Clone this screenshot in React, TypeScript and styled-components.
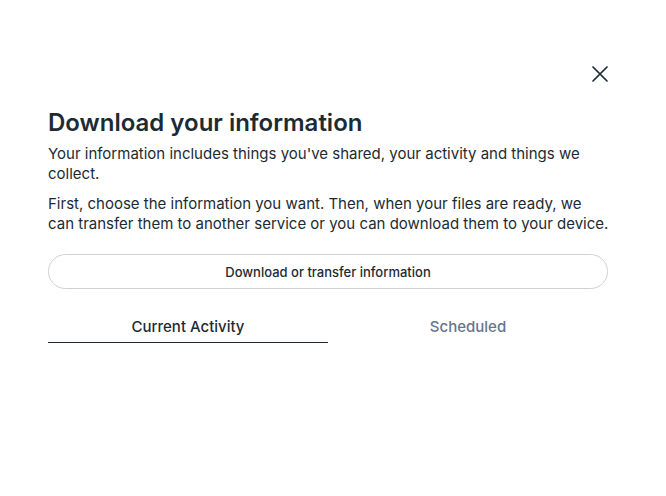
import React from 'react';
import styled, {createGlobalStyle} from 'styled-components';

const Global = createGlobalStyle`
  html, body {
    margin: 0;
    padding: 0;
    background: #fff;
  }
  body {
    font-family: Inter, "Noto Sans", "Liberation Sans", sans-serif;
    color: #1c2b33;
  }
`;

const Page = styled.div`
  width: 666px;
  height: 496px;
  box-sizing: border-box;
  padding: 61px 58px 0 48px;
  display: flex;
  flex-direction: column;
`;

const TopBar = styled.div`
  display: flex;
  justify-content: flex-end;
  height: 26px;
`;

const CloseButton = styled.button`
  width: 26px;
  height: 26px;
  margin-right: -5px;
  border: 0;
  background: none;
  padding: 0;
  display: flex;
  align-items: center;
  justify-content: center;
  cursor: pointer;
  color: #1c2b33;
`;

const Title = styled.h1`
  margin: 21px 0 0;
  font-size: 24px;
  line-height: 30px;
  font-weight: 600;
`;

const Paragraph = styled.p`
  margin: 6px -10px 0 0;
  font-size: 15px;
  line-height: 20px;
  font-weight: 400;
  & + & {
    margin-top: 10px;
  }
`;

const OutlineButton = styled.button`
  margin-top: 20px;
  height: 35px;
  width: 560px;
  border: 1px solid #ced0d4;
  border-radius: 18px;
  background: #fff;
  font-family: inherit;
  font-size: 13px;
  font-weight: 500;
  color: #1c2b33;
  cursor: pointer;
`;

const Tabs = styled.div`
  margin-top: 20px;
  display: grid;
  grid-template-columns: 1fr 1fr;
  width: 560px;
`;

const Tab = styled.button<{$active?: boolean}>`
  height: 34px;
  border: 0;
  border-bottom: 1px solid ${p => (p.$active ? '#1c2b33' : 'transparent')};
  background: none;
  font-family: inherit;
  font-size: 15px;
  font-weight: 500;
  color: ${p => (p.$active ? '#1c2b33' : '#65768c')};
  padding: 2px 0 0;
  cursor: pointer;
`;

export default function App() {
  return (
    <>
      <Global />
      <Page>
        <TopBar>
          <CloseButton aria-label="Close">
            <svg width="18" height="18" viewBox="0 0 18 18" fill="none">
              <path
                d="M2 2 L16 16 M16 2 L2 16"
                stroke="currentColor"
                strokeWidth="1.7"
                strokeLinecap="round"
              />
            </svg>
          </CloseButton>
        </TopBar>
        <Title>Download your information</Title>
        <Paragraph>
          Your information includes things you've shared, your activity and things we collect.
        </Paragraph>
        <Paragraph>
          First, choose the information you want. Then, when your files are ready, we
          <br />
          can transfer them to another service or you can download them to your device.
        </Paragraph>
        <OutlineButton>Download or transfer information</OutlineButton>
        <Tabs>
          <Tab $active>Current Activity</Tab>
          <Tab>Scheduled</Tab>
        </Tabs>
      </Page>
    </>
  );
}
